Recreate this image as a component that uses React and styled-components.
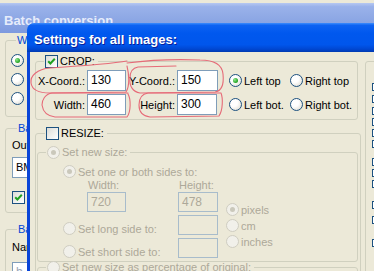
import React from 'react';
import styled, { createGlobalStyle } from 'styled-components';

const GlobalStyle = createGlobalStyle`
  html, body { margin: 0; padding: 0; background: #ece9d8; }
  body { font-family: "Liberation Sans", Arial, sans-serif; font-size: 11px; color: #000; }
  * { box-sizing: border-box; }
`;

const Desktop = styled.div`
  position: relative;
  width: 374px;
  height: 271px;
  overflow: hidden;
  background: #ece9d8;
`;

// back window (inactive)
const BackWindow = styled.div`
  position: absolute;
  left: 0;
  top: 3px;
  width: 420px;
  height: 300px;
  background: #ece9d8;
`;

const BackTitle = styled.div`
  height: 30px;
  padding: 4px 0 0 4px;
  display: flex;
  align-items: center;
  background: linear-gradient(#b6c8f2 0%, #9ab2ea 12%, #8ba6e4 60%, #7d99de 100%);
  color: #e6ecfb;
  font-weight: bold;
  font-size: 13px;
  white-space: nowrap;
`;

const BackBody = styled.div`
  width: 180px;
  padding: 1px 0 0 5px;
  display: flex;
  flex-direction: column;
`;

const Group = styled.fieldset`
  margin: ${p => p.$margin || '0'};
  padding: ${p => p.$pad || '0'};
  border: 1px solid #d0d0bf;
  border-radius: 3px;
  min-width: 0;
`;

const Legend = styled.legend`
  margin-left: ${p => p.$indent}px;
  padding: 0 3px 0 1px;
  height: 13px;
  line-height: 13px;
  color: ${p => (p.$blue ? '#0046d5' : p.$disabled ? '#aca899' : '#000')};
  white-space: nowrap;
`;

const LegendInner = styled.span`
  display: inline-flex;
  align-items: center;
  gap: 2px;
  height: 13px;
`;

const Stack = styled.div`
  display: flex;
  flex-direction: column;
  align-items: flex-start;
  gap: ${p => p.$gap || 0}px;
  margin-top: ${p => p.$top || 0}px;
`;

const Text = styled.div`
  height: 13px;
  line-height: 13px;
  white-space: nowrap;
  color: ${p => (p.$disabled ? '#aca899' : '#000')};
`;

const Select = styled.div`
  width: 150px;
  height: 21px;
  margin-top: 5px;
  border: 1px solid #7f9db9;
  background: #fff;
  padding-left: 3px;
  line-height: 19px;
`;

const Field = styled.div`
  width: ${p => p.$w}px;
  height: ${p => p.$h || 21}px;
  margin-top: ${p => p.$top || 0}px;
  border: 1px solid ${p => (p.$disabled ? '#a8bccb' : '#7f9db9')};
  background: ${p => (p.$disabled ? '#ece9d8' : '#fff')};
  color: ${p => (p.$disabled ? '#aca899' : p.$muted ? '#9aa6b8' : '#000')};
  padding-left: 3px;
  line-height: ${p => (p.$h || 21) - 2}px;
  font-size: 12px;
  align-self: ${p => p.$align || 'auto'};
  justify-self: start;
  grid-column: ${p => p.$col || 'auto'};
  grid-row: ${p => p.$row || 'auto'};
`;

// front dialog (active)
const Dialog = styled.div`
  position: absolute;
  left: 27px;
  top: 23px;
  width: 420px;
  display: flex;
  flex-direction: column;
`;

const DialogTitle = styled.div`
  flex: none;
  height: 29px;
  border-radius: 7px 7px 0 0;
  padding: 3px 0 0 7px;
  display: flex;
  align-items: center;
  background: linear-gradient(#3d8dfd 0%, #0d62f2 8%, #0058ee 35%, #0056ec 75%, #0047d2 90%, #003ab0 100%);
  color: #fff;
  font-weight: bold;
  font-size: 13px;
  text-shadow: 1px 1px #0a1f9a;
`;

const DialogBody = styled.div`
  height: 260px;
  border-left: 3px solid #0a45d8;
  background: #ece9d8;
  display: flex;
  align-items: flex-start;
  padding: 3px 0 0 5px;
`;

const LeftColumn = styled.div`
  flex: none;
  width: 326px;
  display: flex;
  flex-direction: column;
`;

const CropGrid = styled.div`
  display: grid;
  grid-template-columns: 51px 39px 51px 41px 72px auto;
  grid-auto-rows: 21px;
  row-gap: 3px;
  padding: 2px 0 4px 0;
`;

const FieldLabel = styled.div`
  justify-self: end;
  align-self: center;
  padding-right: 2px;
  white-space: nowrap;
`;

const Option = styled.div`
  display: flex;
  align-items: center;
  gap: 2px;
  white-space: nowrap;
  height: 13px;
  padding-left: ${p => p.$indent || 0}px;
  align-self: ${p => p.$valign || 'center'};
  color: ${p => (p.$disabled ? '#aca899' : '#000')};
  grid-column: ${p => p.$span || 'auto'};
`;

const SizeGrid = styled.div`
  display: grid;
  grid-template-columns: 24px 39px 52px 40px 8px 1fr;
  grid-template-rows: 13px 14px 20px 23px 23px;
  padding: 6px 0 3px 25px;
`;

const ColLabel = styled.div`
  grid-column: ${p => p.$col};
  grid-row: 2;
  color: #aca899;
  padding-left: 1px;
  line-height: 13px;
  align-self: end;
`;

const Units = styled.div`
  grid-column: 6;
  grid-row: 3 / span 3;
  display: flex;
  flex-direction: column;
  align-items: flex-start;
  gap: 3px;
  padding-top: 11px;
`;

const RightPanel = styled.fieldset`
  flex: none;
  margin: 0 0 0 4px;
  padding: 0 0 0 6px;
  border: 1px solid #d0d0bf;
  border-radius: 3px;
  height: 230px;
  width: 60px;
`;

const SmallBox = styled.span`
  display: block;
  width: 13px;
  height: 8px;
  margin-top: ${p => p.$top}px;
  border: 1px solid #1c5180;
  background: #fff;
`;

const RadioCircle = styled.span`
  position: relative;
  flex: none;
  width: 13px;
  height: 13px;
  border-radius: 50%;
  border: 1px solid ${p => (p.$disabled ? '#cfcdc1' : '#1c5180')};
  background: ${p =>
    p.$disabled ? '#f1f0ea' : 'radial-gradient(circle at 35% 35%, #ffffff 35%, #d8d5c8 100%)'};

  &::after {
    content: '';
    display: ${p => (p.$checked ? 'block' : 'none')};
    position: absolute;
    left: 3px;
    top: 3px;
    width: 5px;
    height: 5px;
    border-radius: 50%;
    background: ${p =>
      p.$disabled ? '#cac8bb' : 'radial-gradient(circle at 35% 35%, #8ee88e, #21a121 70%)'};
  }
`;

const BoxShell = styled.span`
  flex: none;
  width: 13px;
  height: 13px;
  border: 1px solid #1c5180;
  background: linear-gradient(135deg, #dcdcd7, #ffffff);
  display: inline-flex;
  align-items: center;
  justify-content: center;
`;

const Overlay = styled.svg`
  position: absolute;
  left: 0;
  top: 0;
  pointer-events: none;
`;

const CheckBox = ({ checked }) => (
  <BoxShell>
    {checked && (
      <svg width="9" height="9" viewBox="0 0 9 9">
        <path d="M1.2 4.2 L3.4 6.5 L7.8 1.8" fill="none" stroke="#21a121" strokeWidth="2" />
      </svg>
    )}
  </BoxShell>
);

const Radio = ({ checked, disabled, label, indent, span, valign }) => (
  <Option $disabled={disabled} $indent={indent} $span={span} $valign={valign}>
    <RadioCircle $checked={checked} $disabled={disabled} />
    {label}
  </Option>
);

const rightBoxes = [15, 4, 4, 3, 3, 3, 10, 3, 3, 13, 7, 15];

const App = () => (
  <Desktop>
    <GlobalStyle />

    <BackWindow>
      <BackTitle>Batch conversion</BackTitle>
      <BackBody>
        <Group $pad="7px 0 11px 5px">
          <Legend $indent={5} $blue>Workflow</Legend>
          <Stack $gap={6}>
            <RadioCircle $checked />
            <RadioCircle />
            <RadioCircle />
          </Stack>
        </Group>

        <Group $margin="5px 0 0 0" $pad="4px 0 8px 6px">
          <Legend $indent={5} $blue>Batch output</Legend>
          <Text>Output format:</Text>
          <Select>BMP</Select>
          <Stack $top={13}>
            <CheckBox checked />
          </Stack>
        </Group>

        <Group $margin="10px 0 0 0" $pad="5px 0 8px 6px">
          <Legend $indent={5} $blue>Batch rename</Legend>
          <Text>Name pattern:</Text>
          <Field $w={150} $top={8} $muted>b_t##</Field>
        </Group>
      </BackBody>
    </BackWindow>

    <Dialog>
      <DialogTitle>Settings for all images:</DialogTitle>
      <DialogBody>
        <LeftColumn>
          <Group $margin="0 3px 0 0">
            <Legend $indent={8}>
              <LegendInner><CheckBox checked />CROP:</LegendInner>
            </Legend>
            <CropGrid>
              <FieldLabel>X-Coord.:</FieldLabel>
              <Field $w={39}>130</Field>
              <FieldLabel>Y-Coord.:</FieldLabel>
              <Field $w={41}>150</Field>
              <Radio checked label="Left top" indent={11} />
              <Radio label="Right top" />

              <FieldLabel>Width:</FieldLabel>
              <Field $w={39}>460</Field>
              <FieldLabel>Height:</FieldLabel>
              <Field $w={40}>300</Field>
              <Radio label="Left bot." indent={11} />
              <Radio label="Right bot." />
            </CropGrid>
          </Group>

          <Group $margin="7px 0 0 0" $pad="0 2px 0 1px">
            <Legend $indent={8}>
              <LegendInner><CheckBox />RESIZE:</LegendInner>
            </Legend>

            <Group $margin="6px 0 0 0">
              <Legend $indent={8} $disabled>
                <LegendInner><RadioCircle $checked $disabled />Set new size:</LegendInner>
              </Legend>
              <SizeGrid>
                <Radio checked disabled label="Set one or both sides to:" span="1 / span 6" />
                <ColLabel $col={2}>Width:</ColLabel>
                <ColLabel $col={4}>Height:</ColLabel>

                <Field $disabled $w={39} $h={20} $col={2} $row={3}>720</Field>
                <Field $disabled $w={40} $h={20} $col={4} $row={3}>478</Field>

                <Radio disabled label="Set long side to:" span="1 / span 3" valign="end" />
                <Field $disabled $w={40} $h={20} $align="end" $col={4} $row={4} />

                <Radio disabled label="Set short side to:" span="1 / span 3" valign="end" />
                <Field $disabled $w={40} $h={20} $align="end" $col={4} $row={5} />

                <Units>
                  <Radio checked disabled label="pixels" valign="auto" />
                  <Radio disabled label="cm" valign="auto" />
                  <Radio disabled label="inches" valign="auto" />
                </Units>
              </SizeGrid>
            </Group>

            <Group $margin="-1px 0 0 0" $pad="0 0 20px 0">
              <Legend $indent={8} $disabled>
                <LegendInner><RadioCircle $disabled />Set new size as percentage of original:</LegendInner>
              </Legend>
            </Group>
          </Group>
        </LeftColumn>

        <RightPanel>
          <Legend $indent={3} $blue>Image</Legend>
          {rightBoxes.map((top, i) => (
            <SmallBox key={i} $top={top} />
          ))}
        </RightPanel>
      </DialogBody>
    </Dialog>

    {/* red hand-drawn marks */}
    <Overlay width="374" height="271" viewBox="0 0 374 271">
      <g fill="none" stroke="#e66b78" strokeWidth="1.1" strokeLinecap="round">
        <path d="M127 61 C110 64 80 66 50 68 C37 69 30 76 31 83 C32 90 38 93 50 93 L126 92 C130 86 129 74 127 66" />
        <path d="M127 63 C150 60 175 59 200 60 C214 60 222 64 223 74 C224 84 222 91 215 92 L140 93 C133 92 129 86 130 78 C130 72 132 68 138 67 L176 66" />
        <path d="M128 93 L52 93 C45 94 42 100 42 105 C43 112 47 116 55 117 L127 117 C131 112 131 99 128 94" />
        <path d="M221 93 L148 93 C141 94 139 100 139 105 C139 112 142 116 150 117 L219 116 C223 110 223 98 221 93" />
      </g>
    </Overlay>
  </Desktop>
);

export default App;
